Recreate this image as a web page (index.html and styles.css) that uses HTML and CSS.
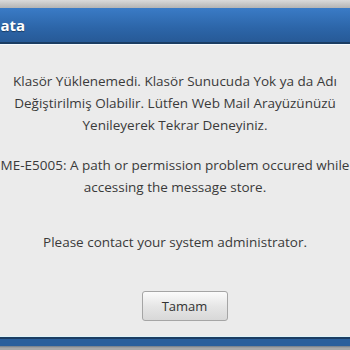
FILE: index.html
```html
<!DOCTYPE html>
<html>
<head>
<meta charset="utf-8">
<link rel="stylesheet" href="styles.css">
</head>
<body>
<div class="screen">
  <div class="top-strip"></div>
  <div class="dialog-wrap">
    <div class="dialog">
      <div class="dialog-header"><span class="title">Hata</span></div>
      <div class="dialog-body">
        <p class="msg msg-first">Klasör Yüklenemedi. Klasör Sunucuda Yok ya da Adı Değiştirilmiş Olabilir. Lütfen Web Mail Arayüzünüzü Yenileyerek Tekrar Deneyiniz.</p>
        <p class="msg msg-code">ME-E5005: A path or permission problem occured while accessing the message store.</p>
        <p class="msg msg-contact">Please contact your system administrator.</p>
        <div class="actions"><button class="btn">Tamam</button></div>
      </div>
    </div>
  </div>
  <div class="bottom-bar"></div>
</div>
</body>
</html>
```

FILE: styles.css
```css
html, body {
  margin: 0;
  padding: 0;
  width: 350px;
  height: 350px;
  overflow: hidden;
  background: #a8a8a8;
}
.screen {
  display: flex;
  flex-direction: column;
  width: 350px;
  height: 350px;
  overflow: hidden;
}
.top-strip {
  height: 8px;
  flex: none;
  background: linear-gradient(#dadada, #b4b4b4);
}
.dialog-wrap {
  display: flex;
  justify-content: center;
  flex: none;
  height: 328px;
}
.dialog {
  width: 390px;
  flex: none;
  display: flex;
  flex-direction: column;
}
.dialog-header {
  height: 34px;
  flex: none;
  background: linear-gradient(#3a7bc6, #2c65a8 60%, #275a97);
  border-bottom: 2px solid #1b3d63;
  display: flex;
  align-items: center;
  padding-left: 9px;
}
.title {
  font-family: "Open Sans", "DejaVu Sans", sans-serif;
  font-weight: bold;
  font-size: 15px;
  color: #ffffff;
  text-shadow: 0 1px 1px rgba(0, 0, 0, 0.4);
}
.dialog-body {
  flex: 1;
  background: #ebebeb;
  border-top: 1px solid #f6fbff;
  padding: 25px 10px 0;
  text-align: center;
  font-family: "Open Sans", "DejaVu Sans", sans-serif;
  font-size: 13.5px;
  line-height: 22px;
  color: #3a3a3a;
}
.msg {
  margin: 0;
}
.msg-code {
  margin-top: 18px;
}
.msg-contact {
  margin-top: 33px;
}
.actions {
  margin-top: 38px;
  display: flex;
  justify-content: center;
}
.btn {
  width: 86px;
  height: 30px;
  margin-left: 19px;
  border: 1px solid #a5a5a5;
  border-radius: 3px;
  background: linear-gradient(#fbfbfb, #e6e6e6 50%, #d8d8d8);
  font-family: "Open Sans", "DejaVu Sans", sans-serif;
  font-size: 13px;
  color: #333;
  padding: 0;
}
.bottom-bar {
  height: 14px;
  flex: none;
  border-top: 1px solid #dff3f8;
  background: linear-gradient(#1b3d63 0, #1b3d63 2px, #2a5f9c 2px, #2a5f9c 9px, #6e7a88 9px, #a8a8a8 11px);
}
```
